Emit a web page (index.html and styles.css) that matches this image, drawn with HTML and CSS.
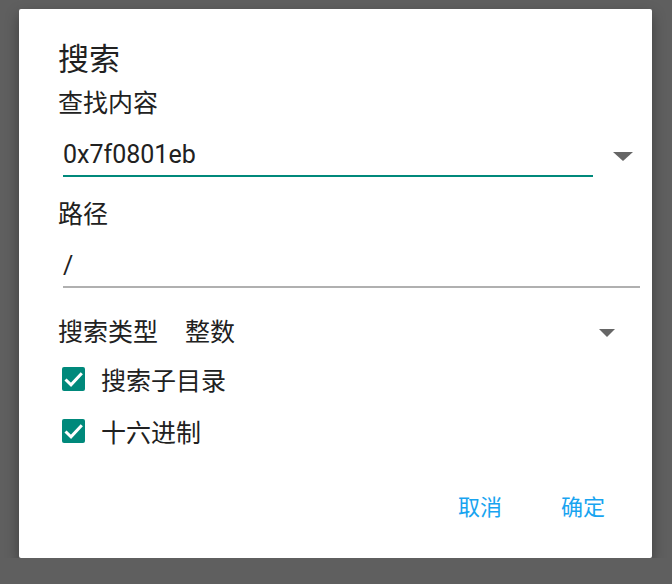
FILE: index.html
```html
<!DOCTYPE html>
<html>
<head>
    <meta charset="utf-8">
    <title>搜索</title>
    <link rel="stylesheet" href="styles.css">
</head>
<body>
    <div class="dialog">
        <div class="dialog-title">搜索</div>

        <div class="field-label first">查找内容</div>
        <div class="combo-row">
            <div class="text-input focused">0x7f0801eb</div>
            <span class="combo-arrow"></span>
        </div>

        <div class="field-label">路径</div>
        <div class="text-input wide">/</div>

        <div class="spinner-row">
            <span class="spinner-label">搜索类型</span>
            <span class="spinner-value">整数</span>
            <span class="spinner-arrow"></span>
        </div>

        <div class="check-list">
            <div class="check-row">
                <span class="check-box">
                    <svg width="23" height="24" viewBox="0 0 23 24">
                        <path d="M3.5 12.5 L9 17.8 L19.8 6.2" fill="none" stroke="#fff" stroke-width="3"/>
                    </svg>
                </span>
                <span class="check-text">搜索子目录</span>
            </div>
            <div class="check-row">
                <span class="check-box">
                    <svg width="23" height="24" viewBox="0 0 23 24">
                        <path d="M3.5 12.5 L9 17.8 L19.8 6.2" fill="none" stroke="#fff" stroke-width="3"/>
                    </svg>
                </span>
                <span class="check-text">十六进制</span>
            </div>
        </div>

        <div class="button-row">
            <span class="dialog-button">取消</span>
            <span class="dialog-button">确定</span>
        </div>
    </div>
</body>
</html>
```

FILE: styles.css
```css
body {
    margin: 0;
    padding: 0;
    background-color: #5f5f5f;
    font-family: Roboto, "Noto Sans CJK SC", sans-serif;
    color: #212121;
}

.dialog {
    box-sizing: border-box;
    width: 633px;
    height: 549px;
    margin: 9px 0 0 19px;
    padding: 33px 12px 0 39px;
    background-color: #fff;
    border-radius: 2px;
    box-shadow: 0 6px 14px rgba(0, 0, 0, 0.35);
}

.dialog-title {
    font-size: 31px;
    line-height: 36px;
}

.field-label {
    font-size: 25px;
    line-height: 30px;
    margin-top: 23px;
}

.field-label.first {
    margin-top: 11px;
}

/* editable line with a dropdown arrow on the right */
.combo-row {
    display: flex;
    align-items: flex-start;
    margin-top: 21px;
}

.text-input {
    margin-left: 5px;
    font-size: 25px;
    line-height: 30px;
    padding-bottom: 5px;
    border-bottom: 2px solid #b0b0b0;
}

.text-input.focused {
    width: 530px;
    border-bottom-color: #00897b;
}

.text-input.wide {
    width: 577px;
    margin-top: 21px;
}

.combo-arrow {
    width: 0;
    height: 0;
    margin: 12px 0 0 20px;
    border-left: 10px solid transparent;
    border-right: 10px solid transparent;
    border-top: 9px solid #666;
}

.spinner-row {
    display: flex;
    align-items: center;
    width: 557px;
    margin-top: 30px;
    font-size: 25px;
    line-height: 30px;
}

.spinner-value {
    margin-left: 27px;
}

.spinner-arrow {
    width: 0;
    height: 0;
    margin-left: auto;
    border-left: 8px solid transparent;
    border-right: 8px solid transparent;
    border-top: 8px solid #666;
}

.check-list {
    margin-top: 8px;
}

.check-row {
    display: flex;
    align-items: center;
    height: 52px;
    font-size: 25px;
}

.check-list .check-row:first-child {
    margin-top: -3px;
}

.check-box {
    display: flex;
    flex-shrink: 0;
    width: 23px;
    height: 24px;
    margin-left: 4px;
    background-color: #00897b;
    border-radius: 2px;
}

.check-text {
    margin-left: 16px;
}

.button-row {
    display: flex;
    justify-content: flex-end;
    gap: 59px;
    margin-top: 36px;
    padding-right: 35px;
}

.dialog-button {
    font-size: 22px;
    line-height: 30px;
    color: #18a4f0;
}
```
